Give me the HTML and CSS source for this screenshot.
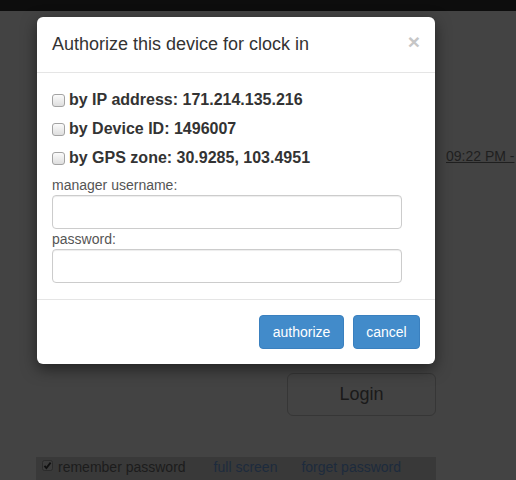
FILE: index.html
```html
<!DOCTYPE html>
<html>
<head>
<meta charset="utf-8">
<title>Authorize device</title>
<link rel="stylesheet" href="styles.css">
</head>
<body>
<div class="topbar"></div>
<div class="page">
  <div class="main">
    <button class="login" type="button">Login</button>
    <div class="options">
      <span class="remember">
        <svg class="mini-check" width="11" height="11" viewBox="0 0 11 11"><rect x="0.5" y="0.5" width="10" height="10" rx="2" fill="#3c3c3c" stroke="#2b2b2b"/><path d="M2.5 5.8 L4.4 8 L8.6 2.6" fill="none" stroke="#101010" stroke-width="1.8"/></svg>
        remember password
      </span>
      <a class="link first">full screen</a>
      <a class="link">forget password</a>
    </div>
  </div>
  <div class="side"><a class="time">09:22 PM -</a></div>
</div>

<div class="modal">
  <div class="modal-header">
    <h4 class="modal-title">Authorize this device for clock in</h4>
    <span class="close">×</span>
  </div>
  <div class="modal-body">
    <div class="opts">
      <label class="opt"><input type="checkbox"> by IP address: 171.214.135.216</label>
      <label class="opt"><input type="checkbox"> by Device ID: 1496007</label>
      <label class="opt"><input type="checkbox"> by GPS zone: 30.9285, 103.4951</label>
    </div>
    <label class="field-label">manager username:</label>
    <input class="field" type="text">
    <label class="field-label">password:</label>
    <input class="field" type="password">
  </div>
  <div class="modal-footer">
    <button class="btn btn-auth" type="button">authorize</button>
    <button class="btn btn-cancel" type="button">cancel</button>
  </div>
</div>
</body>
</html>
```

FILE: styles.css
```css
html, body {
  margin: 0;
  padding: 0;
}
body {
  width: 516px;
  height: 480px;
  overflow: hidden;
  background: #434343;
  font-family: "Liberation Sans", Arial, sans-serif;
  font-size: 14px;
  color: #333;
}
.topbar {
  height: 11px;
  background: #0d0d0d;
}
.page {
  display: flex;
  padding-left: 36px;
  gap: 10px;
}
.main {
  width: 400px;
  flex: none;
  display: flex;
  flex-direction: column;
  align-items: flex-end;
}
.login {
  margin-top: 362px;
  width: 149px;
  height: 43px;
  border: 1px solid #363636;
  border-radius: 6px;
  background: transparent;
  font-family: "Liberation Sans", Arial, sans-serif;
  font-size: 18px;
  color: #1a1a1a;
  padding: 0;
}
.options {
  margin-top: 41px;
  width: 400px;
  height: 30px;
  background: #393939;
  display: flex;
  align-items: flex-start;
  line-height: 20px;
  padding-left: 6px;
  box-sizing: border-box;
  color: #1c1c1c;
}
.remember {
  display: flex;
  align-items: flex-start;
  gap: 5px;
}
.mini-check {
  margin-top: 3px;
}
.link {
  color: #1d2b3d;
  margin-left: 24px;
}
.link.first {
  margin-left: 28px;
}
.side {
  padding-top: 135px;
  white-space: nowrap;
  line-height: 20px;
}
.time {
  color: #1f1f1f;
  text-decoration: underline;
}

/* modal */
.modal {
  position: absolute;
  top: 17px;
  left: 37px;
  width: 398px;
  background: #fff;
  border-radius: 6px;
  box-shadow: 0 5px 15px rgba(0, 0, 0, 0.5);
}
.modal-header {
  display: flex;
  justify-content: space-between;
  align-items: flex-start;
  padding: 15px;
  border-bottom: 1px solid #e5e5e5;
}
.modal-title {
  margin: 0;
  font-size: 18px;
  line-height: 25px;
  font-weight: normal;
  color: #333;
}
.close {
  font-size: 21px;
  font-weight: bold;
  line-height: 25px;
  color: #c6c6c6;
  margin-top: -3px;
}
.modal-body {
  padding: 17px 15px 15px;
  display: flex;
  flex-direction: column;
  align-items: flex-start;
}
.opts {
  display: flex;
  flex-direction: column;
  gap: 9px;
  margin-bottom: 8px;
}
.opt {
  display: flex;
  align-items: center;
  height: 20px;
  line-height: 20px;
  font-size: 16px;
  font-weight: bold;
  color: #333;
}
.opt input {
  -webkit-appearance: none;
  appearance: none;
  box-sizing: border-box;
  margin: 0 4px 0 0;
  width: 13px;
  height: 13px;
  border: 1px solid #a3a3a3;
  border-radius: 3px;
  background: linear-gradient(#fbfbfb, #dedede);
}
.field-label {
  line-height: 18px;
  font-size: 14px;
  color: #555;
  margin-bottom: 1px;
}
.field {
  box-sizing: border-box;
  width: 350px;
  height: 34px;
  border: 1px solid #ccc;
  border-radius: 4px;
  box-shadow: inset 0 1px 1px rgba(0, 0, 0, 0.075);
  margin: 0 0 1px;
  padding: 6px 12px;
}
.modal-footer {
  display: flex;
  justify-content: flex-end;
  gap: 9px;
  padding: 15px;
  border-top: 1px solid #e5e5e5;
}
.btn {
  height: 34px;
  box-sizing: border-box;
  padding: 0;
  border: 1px solid #3a80bf;
  border-radius: 4px;
  background: #428bca;
  color: #fff;
  font-family: "Liberation Sans", Arial, sans-serif;
  font-size: 14px;
}
.btn-auth {
  width: 85px;
}
.btn-cancel {
  width: 67px;
}
```
